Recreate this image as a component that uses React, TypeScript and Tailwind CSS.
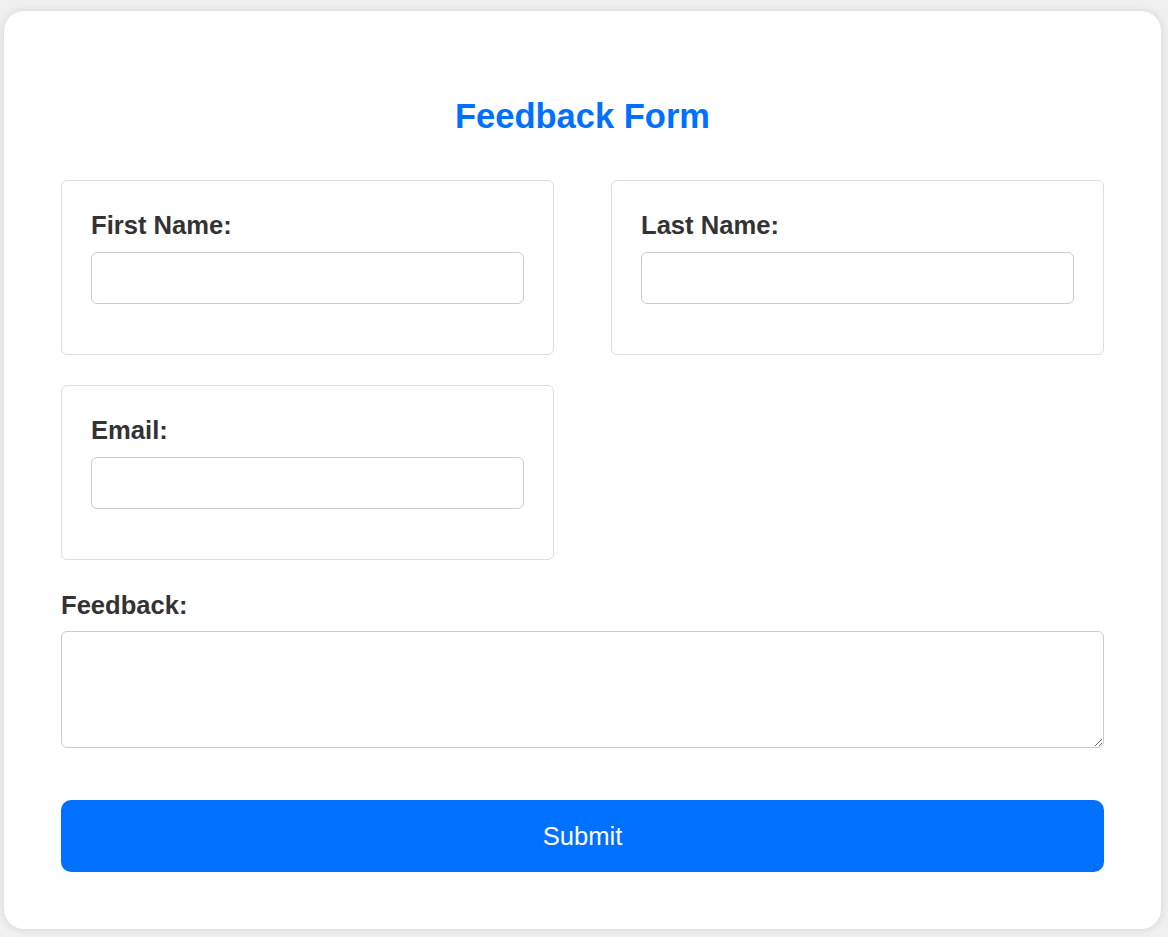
import React from 'react';

function FieldBox({ label, id, type = 'text' }: { label: string; id: string; type?: string }) {
  return (
    <div className="rounded-[6px] border border-[#dddddd] p-[29px]">
      <label htmlFor={id} className="block text-[25.6px] leading-[30px] font-bold text-[#333333]">
        {label}
      </label>
      <input
        id={id}
        type={type}
        className="mt-[12px] mb-[21px] block h-[52px] w-full rounded-[6px] border border-[#cccccc] bg-white px-3 outline-none"
      />
    </div>
  );
}

export default function App() {
  return (
    <div className="min-h-[937px] bg-[#f0f0f0] pt-[11px] pb-[9px] font-['Liberation_Sans',Helvetica,Arial,sans-serif]">
      <div className="ml-[4px] w-[1157px] rounded-[20px] bg-white px-[57px] pt-[85px] pb-[57px] shadow-[0_0_10px_rgba(0,0,0,0.12)]">
        <h1 className="text-center text-[34.5px] leading-[40px] font-bold text-[#0070ff]">Feedback Form</h1>

        <form className="mt-[44px]" onSubmit={(e) => e.preventDefault()}>
          <div className="grid grid-cols-2 gap-x-[57px] gap-y-[30px]">
            <FieldBox label="First Name:" id="first" />
            <FieldBox label="Last Name:" id="last" />
            <FieldBox label="Email:" id="email" type="email" />
          </div>

          <label htmlFor="feedback" className="mt-[30px] block text-[25.6px] leading-[30px] font-bold text-[#333333]">
            Feedback:
          </label>
          <textarea
            id="feedback"
            className="mt-[11px] block h-[117px] w-full rounded-[6px] border border-[#cccccc] bg-white p-3 outline-none"
          />

          <button
            type="submit"
            className="mt-[52px] block h-[72px] w-full rounded-[10px] bg-[#0070ff] text-[25.6px] text-white"
          >
            Submit
          </button>
        </form>
      </div>
    </div>
  );
}
